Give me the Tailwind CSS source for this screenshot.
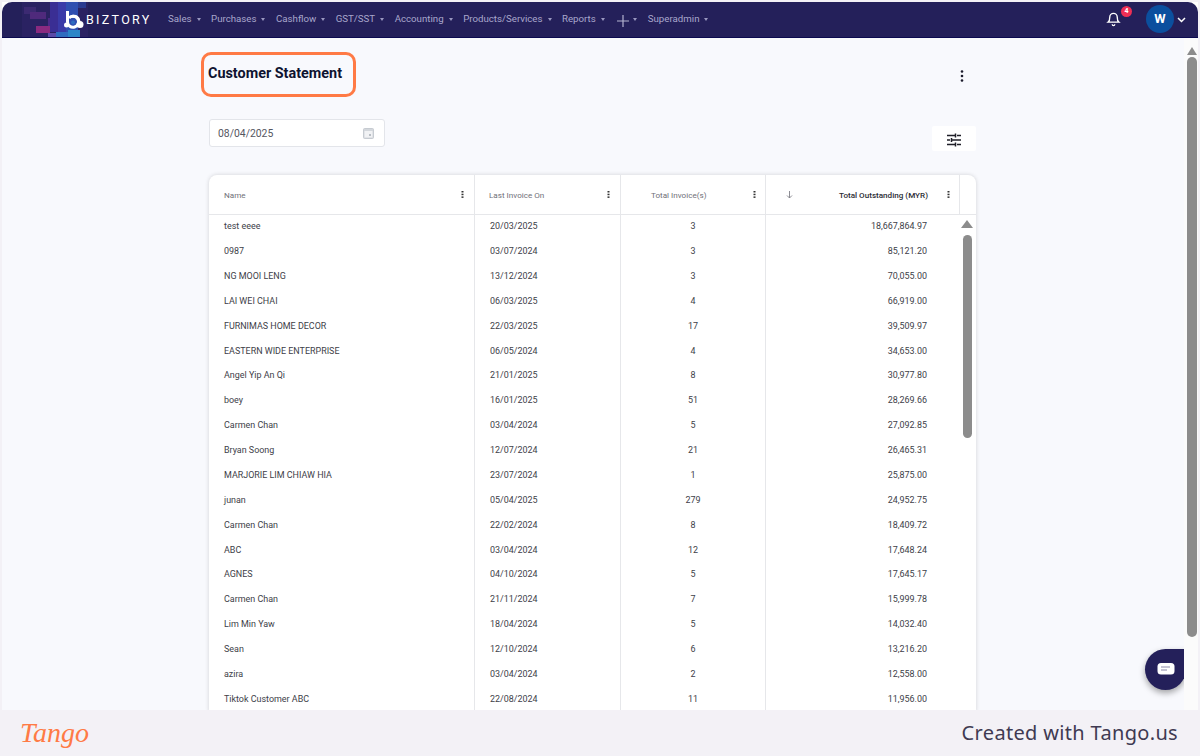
<!DOCTYPE html>
<html lang="en">
<head>
<meta charset="utf-8">
<title>Customer Statement</title>
<script src="https://cdn.jsdelivr.net/npm/@tailwindcss/browser@4"></script>
</head>
<body class="m-0 bg-[#f3f1f6] font-['Roboto',sans-serif]">
<div class="w-[1200px] h-[756px] overflow-hidden flex flex-col bg-[#f3f1f6] rounded-b-[10px]">
  <!-- app frame -->
  <div class="h-[708px] mt-[2px] mx-[2px] bg-white flex flex-col shrink-0">
    <header class="h-[36px] shrink-0 bg-[#24205a] border-b border-[#0b0a50] rounded-t-[10px] flex items-center relative overflow-hidden">
      <svg class="absolute left-0 top-0" width="90" height="36" viewBox="0 0 90 36" aria-hidden="true">
        <rect x="20" y="0" width="66" height="36" fill="#2a2262"/>
        <rect x="22" y="5" width="12" height="7" fill="#3c2a72"/>
        <rect x="28" y="10" width="16" height="7" fill="#4f2a7c"/>
        <rect x="34" y="24" width="14" height="7" fill="#8a2a80"/>
        <rect x="46" y="16" width="8" height="8" fill="#4a2a88"/>
        <rect x="48" y="0" width="12" height="30" fill="#3a2e94"/>
        <rect x="56" y="0" width="12" height="36" fill="#3a3aa8"/>
        <rect x="64" y="0" width="12" height="36" fill="#2f4eb0"/>
        <rect x="46" y="31" width="8" height="5" fill="#5b4aa8"/>
        <rect x="54" y="30" width="12" height="6" fill="#2f6cc0"/>
        <rect x="66" y="28" width="12" height="8" fill="#2c86c8"/>
        <rect x="76" y="0" width="8" height="6" fill="#2a3a90"/>
      </svg>
      <svg class="absolute left-[62px] top-[8px]" width="20" height="19" viewBox="0 0 20 19" aria-hidden="true">
        <path d="M3.500 1v11a5.500 5.500 0 1 0 1.500-4" fill="none" stroke="#fff" stroke-width="3"/>
        <path d="M8 6.500c4-1 7 1 7 5" fill="none" stroke="#fff" stroke-width="3"/>
        <circle cx="16" cy="14.500" r="3.500" fill="#fff"/>
        <circle cx="2.500" cy="15" r="2.500" fill="#fff"/>
        <circle cx="9" cy="12.500" r="2" fill="#2f6cc0"/>
      </svg>
      <span class="absolute left-[84px] top-[10px] text-[12.500px] leading-[16px] tracking-[2.300px] font-normal text-white">BIZTORY</span>
      <nav class="absolute left-[166px] top-0 h-[35px] flex items-center text-[9.700px] text-[#a9a7cc]">
        <span>Sales</span><span class="ml-[5px] mr-[10.500px] w-0 h-0 border-x-[2.500px] border-x-transparent border-t-[3px] border-t-[#9997c0]"></span>
        <span>Purchases</span><span class="ml-[5px] mr-[10.500px] w-0 h-0 border-x-[2.500px] border-x-transparent border-t-[3px] border-t-[#9997c0]"></span>
        <span>Cashflow</span><span class="ml-[5px] mr-[10.500px] w-0 h-0 border-x-[2.500px] border-x-transparent border-t-[3px] border-t-[#9997c0]"></span>
        <span>GST/SST</span><span class="ml-[5px] mr-[10.500px] w-0 h-0 border-x-[2.500px] border-x-transparent border-t-[3px] border-t-[#9997c0]"></span>
        <span>Accounting</span><span class="ml-[5px] mr-[10.500px] w-0 h-0 border-x-[2.500px] border-x-transparent border-t-[3px] border-t-[#9997c0]"></span>
        <span>Products/Services</span><span class="ml-[5px] mr-[10.500px] w-0 h-0 border-x-[2.500px] border-x-transparent border-t-[3px] border-t-[#9997c0]"></span>
        <span>Reports</span><span class="ml-[5px] mr-[12px] w-0 h-0 border-x-[2.500px] border-x-transparent border-t-[3px] border-t-[#9997c0]"></span>
        <svg width="12" height="12" viewBox="0 0 12 12" class="mt-[3px]" aria-hidden="true"><path d="M6 0v12M0 6h12" stroke="#b4b3d0" stroke-width="1.200"/></svg>
        <span class="ml-[4px] mr-[11px] w-0 h-0 border-x-[2.500px] border-x-transparent border-t-[3px] border-t-[#9997c0]"></span>
        <span>Superadmin</span><span class="ml-[5px] w-0 h-0 border-x-[2.500px] border-x-transparent border-t-[3px] border-t-[#9997c0]"></span>
      </nav>
      <svg class="absolute left-[1104px] top-[9px]" width="15" height="16" viewBox="0 0 24 24" fill="none" stroke="#fff" stroke-width="2.200" aria-hidden="true">
        <path d="M6 9a6 6 0 0 1 12 0c0 6 2.500 8 2.500 8h-17S6 15 6 9"/><path d="M10 20.500a2 2 0 0 0 4 0"/>
      </svg>
      <span class="absolute left-[1119px] top-[4px] w-[11px] h-[11px] rounded-full bg-[#ee2f55] text-white text-[7px] font-bold leading-[11px] text-center">4</span>
      <span class="absolute left-[1144px] top-[3px] w-[28px] h-[28px] rounded-full bg-[#0b4f9e] text-white text-[13px] font-bold leading-[28px] text-center">W</span>
      <svg class="absolute left-[1175px] top-[15px]" width="9" height="6" viewBox="0 0 9 6" fill="none" stroke="#fff" stroke-width="1.500" aria-hidden="true"><path d="M1 1l3.500 3.500L8 1"/></svg>
    </header>

    <div class="flex-1 flex min-h-0">
      <main class="w-[1182px] shrink-0 bg-[#f8f9fd] pl-[207px] overflow-hidden relative">
        <div class="w-[767px]">
          <div class="h-[81px] pt-[14px] flex justify-between items-start">
            <h1 class="-ml-[8px] w-[155px] h-[45px] border-[3px] border-[#ff7a45] rounded-[10px] pl-[4px] text-[14.400px] leading-[37px] font-bold text-[#0e1330]">Customer Statement</h1>
            <svg class="mt-[18px] mr-[12px]" width="4" height="12" viewBox="0 0 4 12" fill="#1b1b2b" aria-hidden="true"><circle cx="2" cy="1.500" r="1.300"/><circle cx="2" cy="6" r="1.300"/><circle cx="2" cy="10.500" r="1.300"/></svg>
          </div>
          <div class="h-[56px] flex justify-between items-start">
            <div class="w-[176px] h-[28px] bg-white border border-[#e3e5ea] rounded-[3px] flex items-center justify-between pl-[8px] pr-[10px] text-[10.400px] text-[#55565f]">
              <span class="mt-[1px]">08/04/2025</span>
              <svg width="11" height="12" viewBox="0 0 11 12" fill="none" aria-hidden="true"><rect x="0.500" y="1.500" width="10" height="10" rx="1" fill="#d3d7dc" stroke="#c6cbd1"/><rect x="1.500" y="4" width="8" height="6.500" fill="#f1f2f4"/><rect x="6" y="7" width="2" height="2" fill="#b9bec5"/></svg>
            </div>
            <div class="mt-[7px] w-[44px] h-[25px] bg-white rounded-[2px] flex items-center justify-center">
              <svg class="mt-[2px]" width="14" height="14" viewBox="0 0 14 14" stroke="#1f1f28" stroke-width="1.500" fill="none" aria-hidden="true"><path d="M0 2.500h8M10 2.500h4M8.500 0.500v4M0 7h3M5 7h9M4.500 5v4M0 11.500h8M10 11.500h4M8.500 9.500v4"/></svg>
            </div>
          </div>

          <section class="w-[767px] bg-white rounded-t-[8px] shadow-[0_0_4px_rgba(0,0,0,0.16)] relative">
            <div class="grid grid-cols-[266px_146px_145px_194px_16px] h-[40px] border-b border-[#e6e7ea] text-[8.100px] text-[#6f7078]">
              <div class="border-r border-[#e6e7ea] flex items-center justify-between pl-[15px] pr-[10px]"><span class="mt-[1px]">Name</span><svg width="3" height="7" viewBox="0 0 3 7" fill="#333" aria-hidden="true"><rect x="0.500" y="0" width="2" height="1.500"/><rect x="0.500" y="2.700" width="2" height="1.500"/><rect x="0.500" y="5.400" width="2" height="1.500"/></svg></div>
              <div class="border-r border-[#e6e7ea] flex items-center justify-between pl-[14px] pr-[10px]"><span class="mt-[1px]">Last Invoice On</span><svg width="3" height="7" viewBox="0 0 3 7" fill="#333" aria-hidden="true"><rect x="0.500" y="0" width="2" height="1.500"/><rect x="0.500" y="2.700" width="2" height="1.500"/><rect x="0.500" y="5.400" width="2" height="1.500"/></svg></div>
              <div class="border-r border-[#e6e7ea] flex items-center justify-between pl-[30px] pr-[9px]"><span class="mt-[1px]">Total Invoice(s)</span><svg width="3" height="7" viewBox="0 0 3 7" fill="#333" aria-hidden="true"><rect x="0.500" y="0" width="2" height="1.500"/><rect x="0.500" y="2.700" width="2" height="1.500"/><rect x="0.500" y="5.400" width="2" height="1.500"/></svg></div>
              <div class="border-r border-[#e6e7ea] flex items-center pl-[20px] pr-[9px]"><svg width="7" height="8" viewBox="0 0 7 8" fill="none" stroke="#808088" stroke-width="0.900" aria-hidden="true"><path d="M3.500 0v7M1 4.500l2.500 2.500L6 4.500"/></svg><span class="mt-[1px] ml-auto mr-[19px] text-[#2c2d35] font-medium">Total Outstanding (MYR)</span><svg width="3" height="7" viewBox="0 0 3 7" fill="#333" aria-hidden="true"><rect x="0.500" y="0" width="2" height="1.500"/><rect x="0.500" y="2.700" width="2" height="1.500"/><rect x="0.500" y="5.400" width="2" height="1.500"/></svg></div>
              <div></div>
            </div>
            <div class="-mt-[0.500px] grid grid-cols-[266px_146px_145px_194px] auto-rows-[24.890px] text-[8.950px] text-[#3d3e48] [&>div]:border-r [&>div]:border-[#e6e7ea] [&>div]:flex [&>div]:items-center [&>div:nth-child(4n+1)]:pl-[15px] [&>div:nth-child(4n+2)]:pl-[15px] [&>div:nth-child(4n+3)]:justify-center [&>div:nth-child(4n)]:justify-end [&>div:nth-child(4n)]:pr-[33px] [&>div:nth-child(4n)]:border-r-0">
              <div>test eeee</div><div>20/03/2025</div><div>3</div><div>18,667,864.97</div>
              <div>0987</div><div>03/07/2024</div><div>3</div><div>85,121.20</div>
              <div>NG MOOI LENG</div><div>13/12/2024</div><div>3</div><div>70,055.00</div>
              <div>LAI WEI CHAI</div><div>06/03/2025</div><div>4</div><div>66,919.00</div>
              <div>FURNIMAS HOME DECOR</div><div>22/03/2025</div><div>17</div><div>39,509.97</div>
              <div>EASTERN WIDE ENTERPRISE</div><div>06/05/2024</div><div>4</div><div>34,653.00</div>
              <div>Angel Yip An Qi</div><div>21/01/2025</div><div>8</div><div>30,977.80</div>
              <div>boey</div><div>16/01/2025</div><div>51</div><div>28,269.66</div>
              <div>Carmen Chan</div><div>03/04/2024</div><div>5</div><div>27,092.85</div>
              <div>Bryan Soong</div><div>12/07/2024</div><div>21</div><div>26,465.31</div>
              <div>MARJORIE LIM CHIAW HIA</div><div>23/07/2024</div><div>1</div><div>25,875.00</div>
              <div>junan</div><div>05/04/2025</div><div>279</div><div>24,952.75</div>
              <div>Carmen Chan</div><div>22/02/2024</div><div>8</div><div>18,409.72</div>
              <div>ABC</div><div>03/04/2024</div><div>12</div><div>17,648.24</div>
              <div>AGNES</div><div>04/10/2024</div><div>5</div><div>17,645.17</div>
              <div>Carmen Chan</div><div>21/11/2024</div><div>7</div><div>15,999.78</div>
              <div>Lim Min Yaw</div><div>18/04/2024</div><div>5</div><div>14,032.40</div>
              <div>Sean</div><div>12/10/2024</div><div>6</div><div>13,216.20</div>
              <div>azira</div><div>03/04/2024</div><div>2</div><div>12,558.00</div>
              <div>Tiktok Customer ABC</div><div>22/08/2024</div><div>11</div><div>11,956.00</div>
            </div>
            <!-- table scrollbar -->
            <div class="absolute right-[3px] top-[45px] w-0 h-0 border-x-[6px] border-x-transparent border-b-[8px] border-b-[#8c8c8c]"></div>
            <div class="absolute left-[754px] top-[60px] w-[9px] h-[203px] rounded-full bg-[#8c8c8c]"></div>
          </section>
        </div>
        <!-- chat bubble -->
        <div class="absolute left-[1143px] top-[611px] w-[41px] h-[41px] bg-[#24205a] rounded-full rounded-tr-[4px] shadow-[0_3px_6px_rgba(0,0,0,0.35)] flex items-center justify-center">
          <svg width="18" height="14" viewBox="0 0 18 14" aria-hidden="true"><rect x="0.500" y="0" width="17" height="11.500" rx="3.500" fill="#fff"/><path d="M4 4h9M4 7h6" stroke="#8a88a8" stroke-width="1"/></svg>
        </div>
      </main>
      <!-- page scrollbar -->
      <div class="w-[14px] bg-[#fbfbfb] relative">
        <div class="absolute left-[3px] top-[9px] w-0 h-0 border-x-[5px] border-x-transparent border-b-[8px] border-b-[#8c8c8c]"></div>
        <div class="absolute left-[3px] top-[19px] w-[10px] h-[580px] rounded-full bg-[#8c8c8c]"></div>
      </div>
    </div>
  </div>

  <footer class="h-[46px] shrink-0 flex items-center justify-between pl-[20px] pr-[22px]">
    <span class="font-['Liberation_Serif',serif] italic text-[28px] leading-[40px] text-[#ff7a45] font-normal">Tango</span>
    <span class="font-['Noto_Sans',sans-serif] text-[20px] leading-[28px] tracking-[0.330px] text-[#3f3a52]">Created with Tango.us</span>
  </footer>
</div>
</body>
</html>
